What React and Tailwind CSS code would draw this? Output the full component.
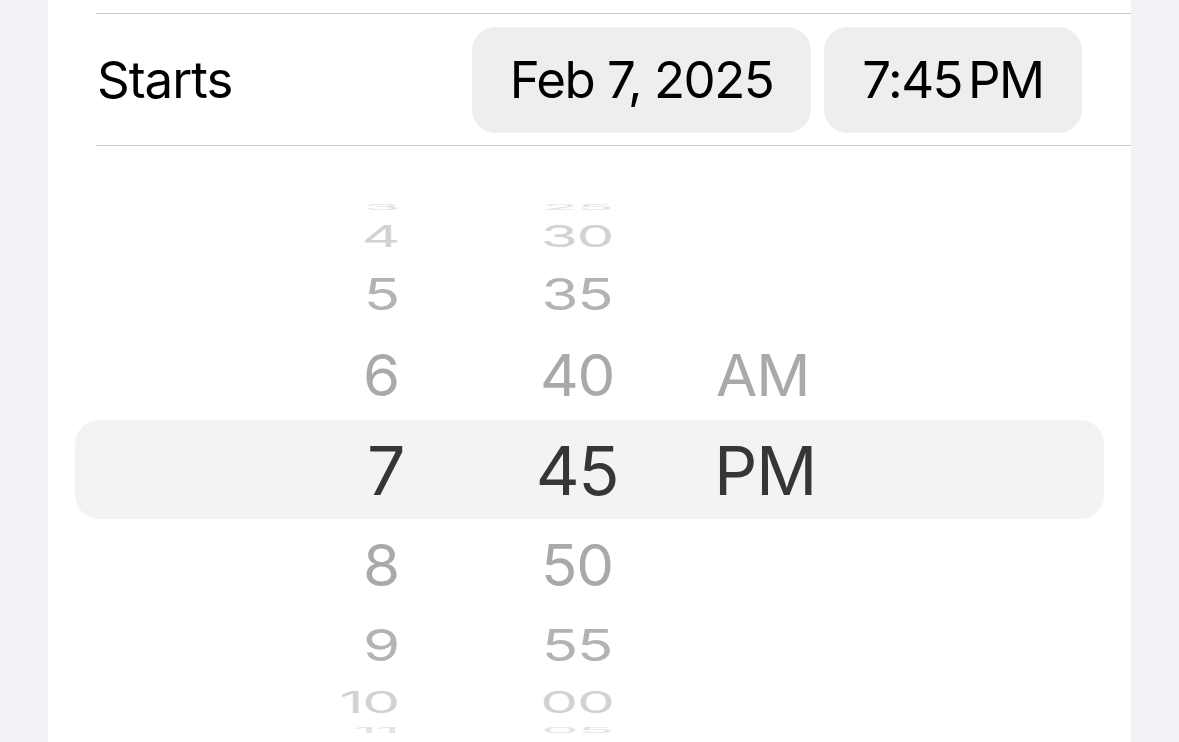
import React from "react";

// ----------------------------------------------------------------------

const upperRows = [
  { h: "3", m: "25", ap: "", rowH: "h-[14px]", scale: "scale-y-[0.12]", color: "text-[#e2e2e2]" },
  { h: "4", m: "30", ap: "", rowH: "h-[44px]", scale: "scale-y-[0.5]", color: "text-[#d2d2d2]" },
  { h: "5", m: "35", ap: "", rowH: "h-[72px]", scale: "scale-y-[0.74]", color: "text-[#b3b3b3]" },
  { h: "6", m: "40", ap: "AM", rowH: "h-[90px]", scale: "scale-y-[0.95]", color: "text-[#a9a9a9]" },
];

const lowerRows = [
  { h: "8", m: "50", ap: "", rowH: "h-[92px]", scale: "scale-y-[0.95]", color: "text-[#a9a9a9]" },
  { h: "9", m: "55", ap: "", rowH: "h-[68px]", scale: "scale-y-[0.74]", color: "text-[#b3b3b3]" },
  { h: "10", m: "00", ap: "", rowH: "h-[46px]", scale: "scale-y-[0.5]", color: "text-[#d2d2d2]" },
  { h: "11", m: "05", ap: "", rowH: "h-[10px]", scale: "scale-y-[0.12]", color: "text-[#e2e2e2]" },
];

function WheelRow({ row }) {
  return (
    <div className={`flex items-center pl-[252px] ${row.rowH} ${row.color}`}>
      <div className="w-[99px] flex justify-end">
        <span className={`block leading-none text-[60px] tracking-[-0.02em] ${row.scale}`}>{row.h}</span>
      </div>
      <div className="ml-[128px] w-[100px] flex justify-center">
        <span className={`block leading-none text-[60px] tracking-[-0.02em] ${row.scale}`}>{row.m}</span>
      </div>
      <div className="ml-[89px] flex justify-start">
        <span className={`block leading-none text-[60px] tracking-[-0.02em] ${row.scale}`}>{row.ap}</span>
      </div>
    </div>
  );
}

export default function App() {
  return (
    <div className="h-[742px] overflow-hidden bg-[#f2f2f7] font-['Inter','Liberation_Sans',sans-serif]">
      <div className="mx-[48px] h-full bg-white overflow-hidden">
        {/* Starts row */}
        <div className="pt-[13px] pl-[48px]">
          <div className="border-t border-b border-[#c8c8cc] h-[133px] flex items-center justify-between pr-[49px]">
            <span className="ml-[1px] text-[51px] tracking-[-0.02em] text-black leading-none">
              Starts
            </span>
            <div className="flex gap-[13px]">
              <div className="w-[339px] h-[106px] rounded-[24px] bg-[#eeeef0] flex items-center justify-center text-[51px] tracking-[-0.03em] text-black leading-none">
                Feb 7, 2025
              </div>
              <div className="w-[258px] h-[106px] rounded-[24px] bg-[#eeeef0] flex items-center justify-center text-[51px] tracking-[-0.03em] text-black leading-none">
                7:45<span className="ml-[6px]">PM</span>
              </div>
            </div>
          </div>
        </div>

        {/* Time wheel */}
        <div className="pt-[54px]">
          {upperRows.map((row) => (
            <WheelRow key={row.h} row={row} />
          ))}
          <div className="mx-[27px] h-[99px] rounded-[24px] bg-[#f3f3f3] flex items-center pl-[225px] text-[#363636]">
            <div className="w-[104px] flex justify-end">
              <span className="block leading-none text-[68px] tracking-[-0.02em]">7</span>
            </div>
            <div className="ml-[123px] w-[100px] flex justify-center">
              <span className="block leading-none text-[68px] tracking-[-0.02em]">45</span>
            </div>
            <div className="ml-[87px] flex justify-start">
              <span className="block leading-none text-[68px] tracking-[-0.02em]">PM</span>
            </div>
          </div>
          {lowerRows.map((row) => (
            <WheelRow key={row.h} row={row} />
          ))}
        </div>
      </div>
    </div>
  );
}
